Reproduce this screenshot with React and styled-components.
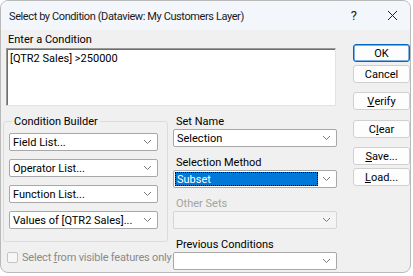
import styled, { createGlobalStyle } from 'styled-components'

const GlobalStyle = createGlobalStyle`
  html, body {
    margin: 0;
    padding: 0;
    background: #ffffff;
  }
  body {
    font-family: Roboto, 'Noto Sans', sans-serif;
    font-size: 11px;
    color: #000;
  }
`

const Chevron = () => (
  <svg width='9' height='6' viewBox='0 0 9 6'>
    <polyline points='1,1 4.5,4.5 8,1' fill='none' stroke='#7a7a7a' strokeWidth='1' />
  </svg>
)

const Dropdown = ({ value, selected, disabled }) => (
  <Select $disabled={disabled}>
    <SelectValue $selected={selected}>{value}</SelectValue>
    <Arrow>
      <Chevron />
    </Arrow>
  </Select>
)

const builderFields = [
  'Field List...',
  'Operator List...',
  'Function List...',
  'Values of [QTR2 Sales]...',
]

const App = () => {
  return (
    <>
      <GlobalStyle />
      <Window>
        <TitleBar>
          <Title>Select by Condition (Dataview: My Customers Layer)</Title>
          <TitleIcons>
            <span>?</span>
            <CloseIcon>
              <svg width='11' height='11' viewBox='0 0 11 11'>
                <path d='M1 1 L10 10 M10 1 L1 10' stroke='#222' strokeWidth='1' />
              </svg>
            </CloseIcon>
          </TitleIcons>
        </TitleBar>
        <Body>
          <Main>
            <Label>Enter a Condition</Label>
            <ConditionBox>[QTR2 Sales] &gt;250000</ConditionBox>
            <Lower>
              <LeftColumn>
                <GroupBox>
                  <Legend>Condition Builder</Legend>
                  <BuilderList>
                    {builderFields.map(f => (
                      <Dropdown key={f} value={f} />
                    ))}
                  </BuilderList>
                </GroupBox>
                <CheckRow>
                  <CheckBox />
                  <span>
                    Select <u>f</u>rom visible features only
                  </span>
                </CheckRow>
              </LeftColumn>
              <RightColumn>
                <Field>
                  <FieldLabel>Set Name</FieldLabel>
                  <Dropdown value='Selection' />
                </Field>
                <Field>
                  <FieldLabel>Selection Method</FieldLabel>
                  <Dropdown value='Subset' selected />
                </Field>
                <Field>
                  <FieldLabel $disabled>Other Sets</FieldLabel>
                  <Dropdown value='' disabled />
                </Field>
                <Field>
                  <FieldLabel>Previous Conditions</FieldLabel>
                  <Dropdown value='' />
                </Field>
              </RightColumn>
            </Lower>
          </Main>
          <Buttons>
            <Button $primary>OK</Button>
            <Button>Cancel</Button>
            <Button $gap={9}>
              <u>V</u>erify
            </Button>
            <Button $gap={10}>
              C<u>l</u>ear
            </Button>
            <Button $gap={9}>
              <u>S</u>ave...
            </Button>
            <Button>
              <u>L</u>oad...
            </Button>
          </Buttons>
        </Body>
      </Window>
    </>
  )
}

export default App

const Window = styled.div`
  width: 411px;
  height: 273px;
  box-sizing: border-box;
  border: 1px solid #b9b9b9;
  border-radius: 8px;
  background: #f0f0f0;
  overflow: hidden;
  display: flex;
  flex-direction: column;
`

const TitleBar = styled.div`
  height: 29px;
  flex-shrink: 0;
  background: #f3f6fb;
  display: flex;
  align-items: center;
  justify-content: space-between;
  padding: 0 12px 0 8px;
`

const Title = styled.div`
  color: #1a1a1a;
  margin-top: 1px;
  letter-spacing: -0.4px;
`

const TitleIcons = styled.div`
  display: flex;
  align-items: center;
  gap: 30px;
  font-size: 13px;
  color: #222;
`

const CloseIcon = styled.span`
  display: flex;
`

const Body = styled.div`
  display: flex;
  padding: 0 0 0 2px;
`

const Main = styled.div`
  width: 335px;
  display: flex;
  flex-direction: column;
`

const Label = styled.div`
  margin: 2px 0 0 5px;
  line-height: 15px;
`

const ConditionBox = styled.div`
  margin: 1px 0 0 3px;
  height: 58px;
  width: 330px;
  box-sizing: border-box;
  background: #fff;
  border: 1px solid #9a9a9a;
  border-right-color: #e3e3e3;
  border-bottom-color: #e3e3e3;
  box-shadow: inset 1px 1px 0 #6d6d6d;
  padding: 3px 3px;
  line-height: 14px;
`

const Lower = styled.div`
  display: flex;
  gap: 5px;
  margin-top: 8px;
`

const LeftColumn = styled.div`
  width: 165px;
  display: flex;
  flex-direction: column;
`

const GroupBox = styled.fieldset`
  margin: 0;
  padding: 0 9px 12px 5px;
  border: 1px solid #dcdcdc;
  border-radius: 3px;
  min-width: 0;
`

const Legend = styled.legend`
  padding: 0 2px;
  margin-left: 3px;
  line-height: 15px;
`

const BuilderList = styled.div`
  display: flex;
  flex-direction: column;
  gap: 8px;
  margin-top: 4px;
`

const Select = styled.div`
  height: 18px;
  box-sizing: border-box;
  display: flex;
  align-items: center;
  background: ${p => (p.$disabled ? '#f4f4f4' : '#fff')};
  border: 1px solid ${p => (p.$disabled ? '#d5d5d5' : '#a8a8a8')};
  border-radius: 2px;
  padding: 1px;
`

const SelectValue = styled.div`
  flex: 1;
  height: 100%;
  box-sizing: border-box;
  display: flex;
  align-items: center;
  padding-left: 2px;
  white-space: nowrap;
  overflow: hidden;
  background: ${p => (p.$selected ? '#0078d7' : 'transparent')};
  color: ${p => (p.$selected ? '#fff' : '#000')};
  outline: ${p => (p.$selected ? '1px dotted #000' : 'none')};
  outline-offset: -1px;
`

const Arrow = styled.div`
  width: 17px;
  display: flex;
  align-items: center;
  justify-content: center;
  flex-shrink: 0;
`

const CheckRow = styled.div`
  display: flex;
  align-items: center;
  gap: 4px;
  margin: 9px 0 0 4px;
  color: #8a8a8a;
  white-space: nowrap;
  letter-spacing: -0.2px;
`

const CheckBox = styled.span`
  flex-shrink: 0;
  width: 11px;
  height: 11px;
  box-sizing: border-box;
  border: 1px solid #c4c4c4;
  border-radius: 2px;
  background: #f7f7f7;
`

const RightColumn = styled.div`
  width: 164px;
  display: flex;
  flex-direction: column;
  gap: 8px;
`

const Field = styled.div`
  display: flex;
  flex-direction: column;
`

const FieldLabel = styled.div`
  line-height: 15px;
  margin-left: 3px;
  color: ${p => (p.$disabled ? '#a3a3a3' : '#000')};
`

const Buttons = styled.div`
  display: flex;
  flex-direction: column;
  margin: 14px 0 0 15px;
`

const Button = styled.div`
  width: 57px;
  height: 18px;
  box-sizing: border-box;
  margin-top: ${p => (p.$gap ? p.$gap : 3)}px;
  &:first-child {
    margin-top: 0;
  }
  display: flex;
  align-items: center;
  justify-content: center;
  background: #fdfdfd;
  border: 1px solid ${p => (p.$primary ? '#0067c0' : '#d0d0d0')};
  border-radius: 3px;
  box-shadow: ${p => (p.$primary ? 'inset 0 0 0 0.5px #0067c0' : 'none')};
`
